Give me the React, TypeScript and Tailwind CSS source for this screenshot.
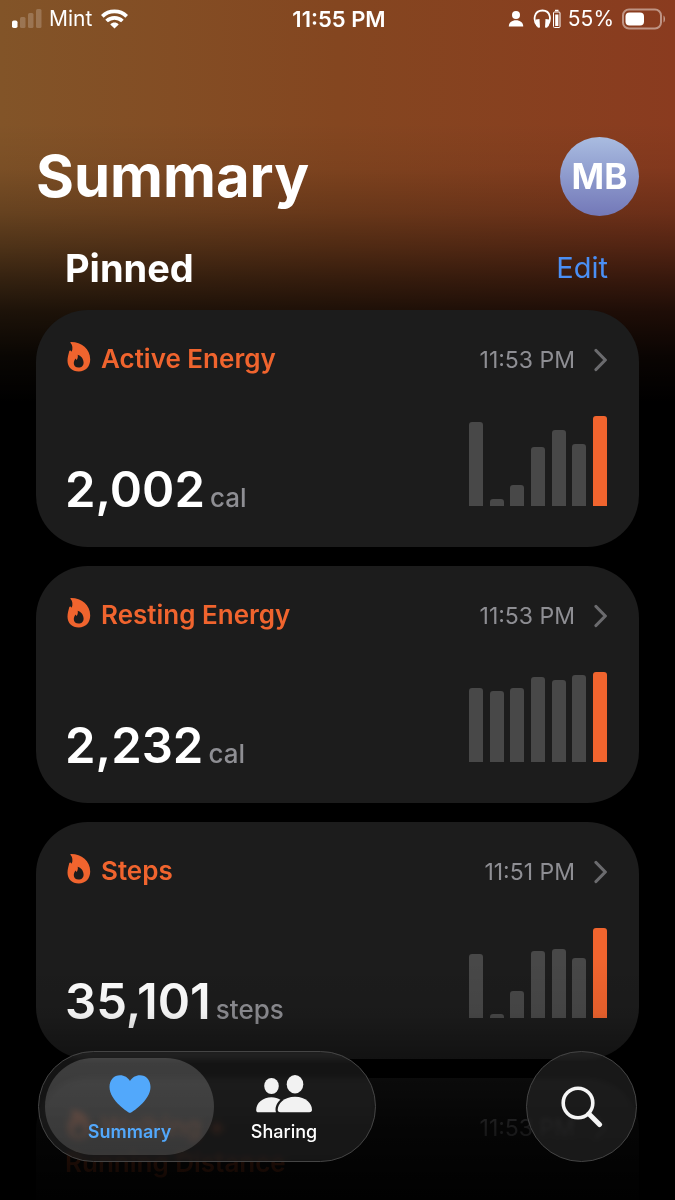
import React from "react";

type Metric = {
  title: string[];
  time: string;
  value?: string;
  unit?: string;
  bars?: number[];
};

const metrics: Metric[] = [
  { title: ["Active Energy"], time: "11:53 PM", value: "2,002", unit: "cal", bars: [84, 7, 21, 59, 76, 62, 90] },
  { title: ["Resting Energy"], time: "11:53 PM", value: "2,232", unit: "cal", bars: [74, 71, 74, 85, 82, 87, 90] },
  { title: ["Steps"], time: "11:51 PM", value: "35,101", unit: "steps", bars: [64, 4, 27, 67, 69, 60, 90] },
  { title: ["Walking +", "Running Distance"], time: "11:53 PM" },
];

const FlameIcon: React.FC = () => (
  <svg viewBox="-2 0 26 30" className="mr-[10px] inline-block h-[30px] w-[26px] align-[-4px]" fill="currentColor" aria-hidden="true">
    <path
      fillRule="evenodd"
      d="M3.6.9C3.1.5 3.5 0 4.2 0 14.500 0 23.200 6.500 23.200 17.500 23.200 24.600 18.600 29.500 11.800 29.500 5 29.500.5 25.200.5 18.800.5 15.400 1.500 12.600 2 10.300 2.200 9.200 2.600 8.200 3.400 8.600 4 8.900 4.300 9.400 4.700 9.800 6 6.700 5.600 3 3.600.9ZM10.700 12.700C11.200 15 10.500 16.500 9.700 18 9.100 17.600 8.900 17 8.700 16.500 7.500 17.800 6.800 19.600 6.800 21.300 6.800 24 8.800 25.600 11.600 25.600 14.500 25.600 16.600 23.700 16.600 20.700 16.600 16.800 14 13.600 10.700 12.700Z"
    />
  </svg>
);

const ChevronIcon: React.FC = () => (
  <svg viewBox="0 0 14 24" className="h-6 w-[14px]" fill="none" stroke="#6b6b6e" strokeWidth="3.200" strokeLinecap="round" strokeLinejoin="round" aria-hidden="true">
    <path d="M3 2.500 12.300 12 3 21.500" />
  </svg>
);

const StatusBar: React.FC = () => (
  <div className="grid h-[38px] grid-cols-[1fr_auto_1fr] items-center pr-[9px] pl-3 text-[21px]">
    <div className="flex items-center">
      <svg viewBox="0 0 30 20" className="mr-[7px] h-5 w-[30px]" fill="white" role="img" aria-label="Signal strength">
        <rect x="0" y="11.500" width="5.500" height="7.500" rx="1.800" />
        <rect x="8" y="8" width="5.500" height="11" rx="1.500" opacity="0.2" />
        <rect x="16" y="4" width="5.500" height="15" rx="1.500" opacity="0.2" />
        <rect x="24" y="0" width="5.500" height="19" rx="1.500" opacity="0.2" />
      </svg>
      <span>Mint</span>
      <svg viewBox="0 0 27 20" className="ml-[9px] h-5 w-[27px]" fill="none" stroke="white" strokeWidth="3.800" role="img" aria-label="Wi-Fi">
        <path d="M1.300 7.400C8 .8 19 .8 25.700 7.400" />
        <path d="M5.600 12C10 7.800 17 7.800 21.400 12" />
        <path d="M9.300 15.400C11.800 13 15.200 13 17.700 15.400L13.500 19.400Z" fill="white" stroke="none" />
      </svg>
    </div>
    <span className="text-[22px] font-semibold">11:55 PM</span>
    <div className="flex items-center justify-end">
      <svg viewBox="0 0 16 16" className="mr-[9px] h-4 w-4" fill="white" aria-hidden="true">
        <circle cx="8" cy="4" r="4" />
        <path d="M.8 15.500C.6 11.500 4 9.200 8 9.200S15.400 11.500 15.200 15.500Z" />
      </svg>
      <svg viewBox="0 0 28 20" className="mr-[7px] h-5 w-7" fill="none" stroke="white" role="img" aria-label="Headphones battery">
        <path d="M4.500 17C-.5 11 1 1.500 9.500 1.500S18.500 11 14.500 17" strokeWidth="1.800" />
        <path d="M3 10.500 6.500 10 7 18.500 5 18.800C3 16.500 2.200 13.500 3 10.500ZM16 10.500 12.500 10 12 18.500 14 18.800C16 16.500 16.800 13.500 16 10.500Z" fill="white" stroke="none" />
        <rect x="20.500" y="3" width="6.500" height="15.500" rx="1" strokeWidth="1" />
        <path d="M22 1.500H25.500" strokeWidth="1.500" />
        <rect x="22.200" y="5.500" width="3.200" height="11.500" fill="white" stroke="none" />
      </svg>
      <span>55%</span>
      <svg viewBox="0 0 44 22" className="ml-2 h-[22px] w-11" fill="none" role="img" aria-label="Battery">
        <rect x="1" y="1.500" width="38" height="19" rx="6" stroke="white" strokeOpacity="0.45" strokeWidth="2" />
        <rect x="3.500" y="4.500" width="18.500" height="13" rx="4" fill="white" />
        <path d="M41.500 7.500C43.500 8.500 43.500 13.500 41.500 14.500Z" fill="white" fillOpacity="0.5" />
      </svg>
    </div>
  </div>
);

const MetricCard: React.FC<{ metric: Metric }> = ({ metric }) => {
  const { title, time, value, unit, bars } = metric;

  return (
    <a href="#" className="flex h-[237px] shrink-0 flex-col justify-between rounded-[52px] bg-[#1c1c1c] pt-[31px] pr-8 pb-[41px] pl-[29px]">
      <div className="flex items-start justify-between">
        <h3 className="text-[26px] leading-9 font-semibold text-[#f0642e]">
          <FlameIcon />
          {title[0]}
          {title[1] && <span className="block">{title[1]}</span>}
        </h3>
        <div className="flex h-[38px] items-center gap-[18px] text-[23px] text-[#8e8e93]">
          <span>{time}</span>
          <ChevronIcon />
        </div>
      </div>
      {bars && (
        <div className="flex h-[90px] items-end justify-between">
          <p className="flex items-baseline gap-[5px] leading-4">
            <span className="text-[49px] font-semibold text-white">{value}</span>
            <span className="text-[26px] font-medium text-[#8e8e93]">{unit}</span>
          </p>
          <div className="flex w-[138px] items-end justify-between">
            {bars.map((height, i) => (
              <div
                key={i}
                className={`w-[14px] rounded-t-[3px] ${i === bars.length - 1 ? "bg-[#f0642e]" : "bg-[#484848]"}`}
                style={{ height }}
              />
            ))}
          </div>
        </div>
      )}
    </a>
  );
};

const TabBar: React.FC = () => (
  <nav className="absolute inset-x-[38px] bottom-[38px] flex items-center justify-between">
    <div className="flex h-[111px] items-center rounded-full border border-[#454545] bg-[#1c1c1c]/70 pr-[21px] pl-[6px] backdrop-blur-[3px] backdrop-brightness-[2.5]">
      <button className="flex h-[97px] w-[169px] flex-col items-center rounded-full bg-linear-to-b from-white/18 to-white/14 pt-[17px] text-[#52a8fb]">
        <svg viewBox="0 0 42 38" className="h-[38px] w-[42px]" fill="currentColor" aria-hidden="true">
          <path d="M21 38C19.800 38 .5 25.500.5 12 .5 5 5 .3 11 .3 15.500.3 19 2.700 21 6 23 2.700 26.500.3 31 .3 37 .3 41.500 5 41.500 12 41.500 25.500 22.200 38 21 38Z" />
        </svg>
        <span className="mt-[5px] text-lg font-semibold">Summary</span>
      </button>
      <button className="flex h-[97px] w-[140px] flex-col items-center pt-[17px] text-white">
        <svg viewBox="0 0 56 38" className="h-[38px] w-14" fill="#f2f2f2" aria-hidden="true">
          <ellipse cx="15.500" cy="11" rx="7.300" ry="8" />
          <ellipse cx="39" cy="9.300" rx="8.300" ry="9.200" />
          <path d="M2.500 37.300C.8 37.300.2 36.500.2 35 .2 28 7 22.300 15.500 22.300 19 22.300 22 23.200 24.400 24.700 20.500 28 18.600 33 20 37.300Z" />
          <path d="M24.500 37.300C22.500 37.300 21.700 36.400 21.700 34.800 21.700 28.500 28 21.700 39 21.700S56 28.500 56 34.800C56 36.400 55.300 37.300 53.300 37.300Z" />
        </svg>
        <span className="mt-[5px] text-lg font-medium">Sharing</span>
      </button>
    </div>
    <button aria-label="Search" className="flex size-[111px] items-center justify-center rounded-full border border-[#454545] bg-[#1e1e1e]/80 backdrop-blur-[2px] backdrop-brightness-200">
      <svg viewBox="0 0 42 42" className="size-[42px]" fill="none" stroke="#f5f5f5" strokeLinecap="round" aria-hidden="true">
        <circle cx="17" cy="17" r="14.800" strokeWidth="3.600" />
        <path d="M28 28 38.500 38.500" strokeWidth="5" />
      </svg>
    </button>
  </nav>
);

const App: React.FC = () => {
  return (
    <div className="relative flex h-screen flex-col overflow-hidden bg-black font-['Inter','Liberation_Sans',sans-serif] text-white">
      {/* Warm header glow */}
      <div className="absolute inset-x-0 top-0 h-[410px] bg-linear-to-r from-[#825428] via-[#844620] to-[#8a3b1f]">
        <div className="h-full bg-[linear-gradient(to_bottom,transparent_30%,rgba(0,0,0,0.06)_41%,rgba(0,0,0,0.22)_52%,rgba(0,0,0,0.4)_60%,rgba(0,0,0,0.6)_68%,rgba(0,0,0,0.78)_76%,rgba(0,0,0,0.93)_87%,black_98%)]" />
      </div>

      <div className="relative">
        <StatusBar />
        <header className="flex items-center justify-between px-9 pt-[99px]">
          <h1 className="text-[58px] leading-[79px] font-bold">Summary</h1>
          <button className="size-[79px] rounded-full bg-linear-to-b from-[#a9bce0] to-[#7378b8] text-[35px] font-bold">MB</button>
        </header>
      </div>

      <main className="relative px-9">
        <div className="flex items-center justify-between pt-[27px] pr-[31px] pb-[17px] pl-[29px]">
          <h2 className="text-[38px] leading-[50px] font-bold">Pinned</h2>
          <button className="text-[29px] text-[#4a8ff5]">Edit</button>
        </div>
        <div className="flex flex-col gap-[19px]">
          {metrics.map((metric) => (
            <MetricCard key={metric.title[0]} metric={metric} />
          ))}
        </div>
      </main>

      {/* Content fades out under the tab bar */}
      <div className="pointer-events-none absolute inset-x-0 bottom-0 h-60 bg-[linear-gradient(to_bottom,transparent,rgba(0,0,0,0.06)_22%,rgba(0,0,0,0.35)_41%,rgba(0,0,0,0.62)_50%,rgba(0,0,0,0.82)_70%,rgba(0,0,0,0.97))]" />
      <TabBar />
    </div>
  );
};

export default App;
